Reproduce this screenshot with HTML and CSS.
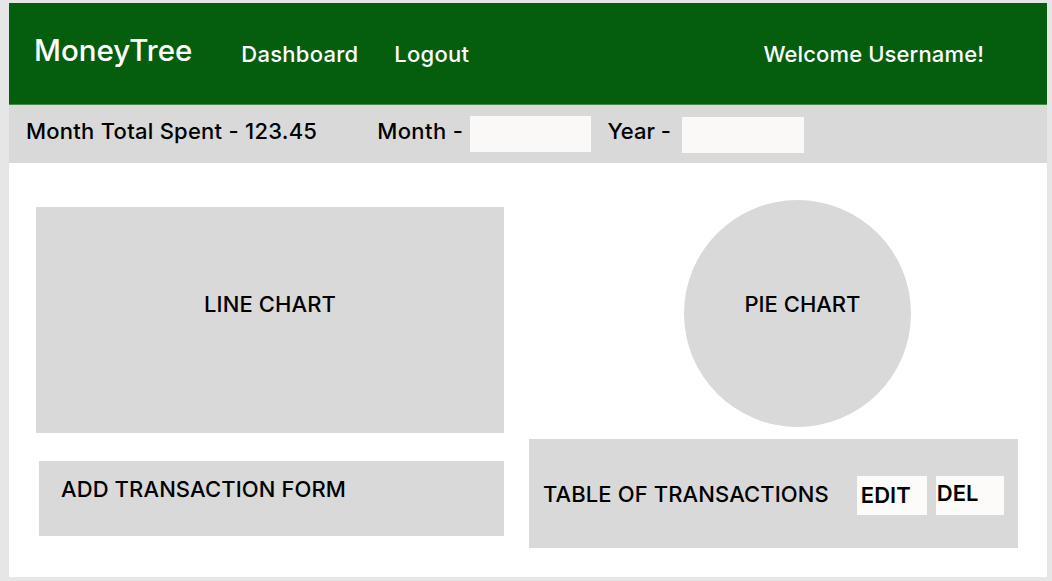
FILE: index.html
```html
<!DOCTYPE html>
<html>
<head>
<meta charset="utf-8">
<link rel="stylesheet" href="styles.css">
</head>
<body>
<div class="frame">
  <header class="topbar">
    <div class="brand">MoneyTree</div>
    <nav class="nav">
      <span class="nav-link">Dashboard</span>
      <span class="nav-link">Logout</span>
    </nav>
    <div class="welcome">Welcome Username!</div>
  </header>
  <div class="summary">
    <span class="total">Month Total Spent - 123.45</span>
    <span class="field-label month-label">Month -</span>
    <span class="field-input"></span>
    <span class="field-label year-label">Year -</span>
    <span class="field-input year-input"></span>
  </div>
  <main class="main">
    <div class="col-left">
      <div class="line-chart"><span>LINE CHART</span></div>
      <div class="add-form">ADD TRANSACTION FORM</div>
    </div>
    <div class="col-right">
      <div class="pie-chart"><span>PIE CHART</span></div>
      <div class="table-box">
        <span class="table-title">TABLE OF TRANSACTIONS</span>
        <span class="btn btn-edit">EDIT</span>
        <span class="btn btn-del">DEL</span>
      </div>
    </div>
  </main>
</div>
</body>
</html>
```
FILE: styles.css
```css
* { box-sizing: border-box; }
html, body { margin: 0; padding: 0; }
body {
  background: #e6e6e6;
  font-family: Inter, "Noto Sans", sans-serif;
  padding: 3px 5px 4px 9px;
  width: 1052px;
  height: 581px;
  overflow: hidden;
}
.frame {
  width: 1038px;
  height: 574px;
  background: #ffffff;
  display: flex;
  flex-direction: column;
}
.topbar {
  height: 102px;
  background: #055d0e;
  border-bottom: 1px solid #3f8a45;
  display: flex;
  align-items: center;
  color: #ffffff;
  padding-left: 25px;
  line-height: 1;
}
.brand {
  font-size: 29.5px;
  font-weight: 500;
  margin-top: -6px;
}
.nav {
  display: flex;
  gap: 36px;
  margin-left: 49px;
}
.nav-link {
  font-size: 22px;
  font-weight: 500;
  letter-spacing: 0.25px;
}
.welcome {
  margin-left: auto;
  margin-right: 63px;
  font-size: 22px;
  font-weight: 500;
  letter-spacing: 0.12px;
}
.summary {
  height: 58px;
  background: #d9d9d9;
  display: flex;
  align-items: flex-start;
  padding-left: 17px;
  color: #000;
  font-size: 22px;
  font-weight: 500;
  line-height: 1;
}
.total { margin: 15px 60px 0 0; letter-spacing: 0.25px; }
.field-label { margin-top: 15px; }
.month-label { margin-right: 7px; letter-spacing: 0.4px; }
.field-input {
  width: 121px;
  height: 36px;
  background: #faf9f8;
  margin-top: 11px;
}
.year-label { margin-left: 16px; margin-right: 11px; }
.year-input { width: 122px; margin-top: 12px; }
.main {
  flex: 1;
  display: flex;
  padding-left: 27px;
  font-size: 22px;
  font-weight: 500;
  line-height: 1;
}
.col-left {
  width: 468px;
  padding-top: 44px;
  display: flex;
  flex-direction: column;
}
.line-chart {
  height: 226px;
  background: #d9d9d9;
  display: flex;
  justify-content: center;
  padding-top: 86px;
  letter-spacing: 0.1px;
}
.add-form {
  margin-top: 28px;
  margin-left: 3px;
  height: 75px;
  background: #d9d9d9;
  padding: 17px 0 0 22px;
  letter-spacing: 0.1px;
}
.col-right {
  width: 489px;
  margin-left: 25px;
  padding-top: 37px;
  display: flex;
  flex-direction: column;
}
.pie-chart {
  width: 227px;
  height: 227px;
  border-radius: 50%;
  background: #d9d9d9;
  margin-left: 155px;
  display: flex;
  justify-content: center;
  padding-top: 93px;
  padding-left: 10px;
}
.table-box {
  margin-top: 12px;
  height: 109px;
  background: #d9d9d9;
  display: flex;
  align-items: flex-start;
  padding-left: 14px;
}
.table-title { margin: 44px 28px 0 0; letter-spacing: 0.1px; }
.btn {
  display: block;
  height: 39px;
  margin-top: 37px;
  background: #fdfafa;
  font-weight: 600;
}
.btn-edit { width: 70px; padding: 8px 0 0 4px; }
.btn-del { width: 68px; margin-left: 9px; padding: 6px 0 0 1px; }
```
